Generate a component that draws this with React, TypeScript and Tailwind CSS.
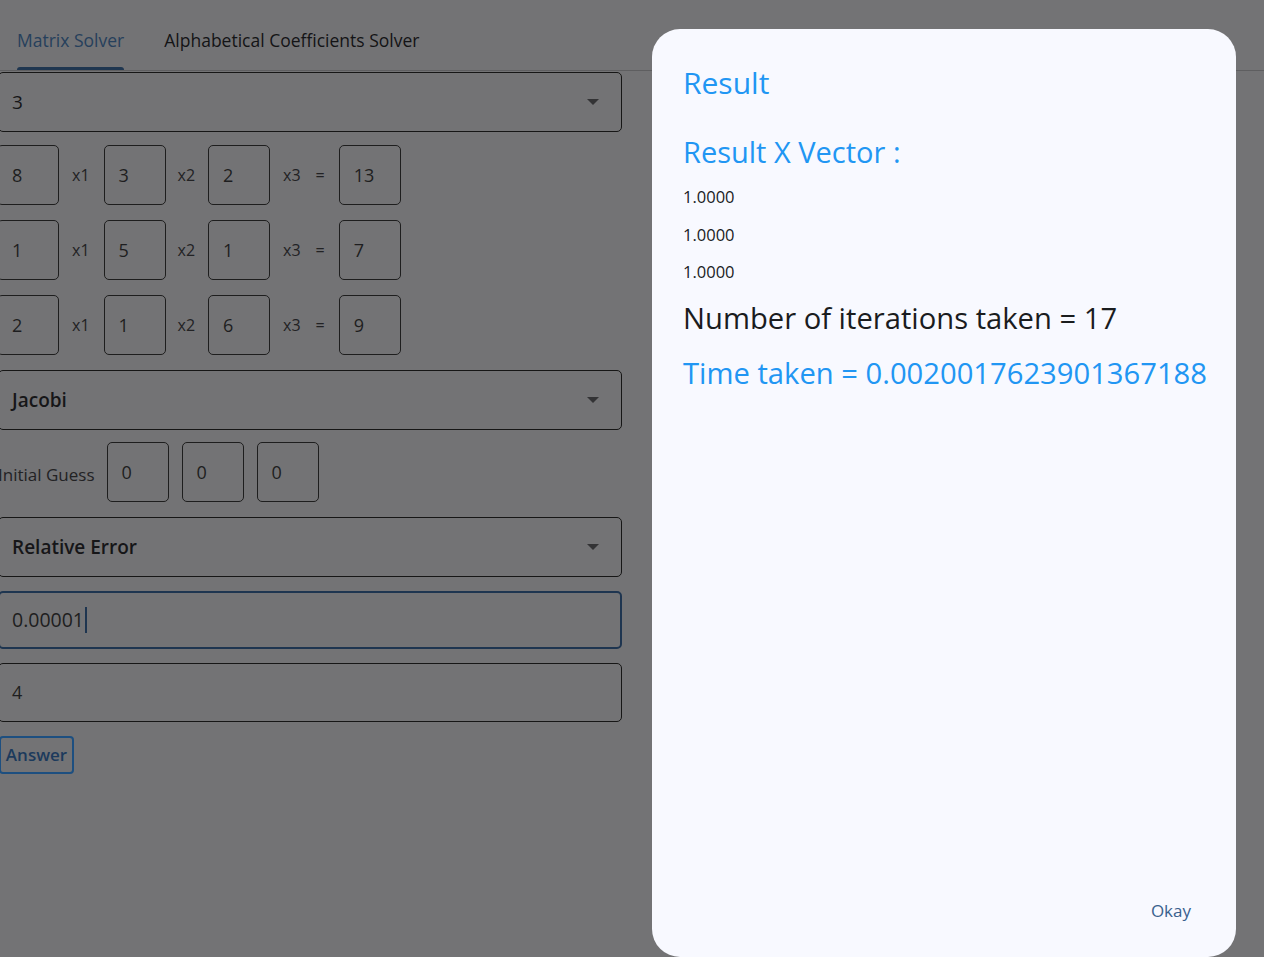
import React from "react";

const font = "font-['Open_Sans',sans-serif]";

function Arrow() {
  return (
    <svg width="12" height="6" viewBox="0 0 12 6" className="shrink-0">
      <path d="M0 0 L12 0 L6 6 Z" fill="#333335" />
    </svg>
  );
}

function Dropdown({ value, bold }: { value: string; bold?: boolean }) {
  return (
    <div className="flex h-[60px] w-[624px] items-center justify-between rounded-[5px] border border-[#161616] pl-[13px] pr-[22px]">
      <span className={"text-[19px] text-[#161618] " + (bold ? "font-semibold" : "")}>{value}</span>
      <Arrow />
    </div>
  );
}

function Cell({ v }: { v: string }) {
  return (
    <div className="flex h-[60px] w-[62px] items-center rounded-[5px] border border-[#1e1e1e] pl-[14px] text-[18px] text-[#1e1e20]">
      {v}
    </div>
  );
}

function Label({ t, cls }: { t: string; cls: string }) {
  return <span className={"text-[16px] text-[#222224] " + cls}>{t}</span>;
}

const rows = [
  ["8", "3", "2", "13"],
  ["1", "5", "1", "7"],
  ["2", "1", "6", "9"],
];

export default function App() {
  return (
    <div className={"relative h-[957px] w-[1264px] overflow-hidden bg-[#737375] " + font}>
      {/* tab bar */}
      <div className="flex h-[71px] items-end border-b border-[#5e5e60]">
        <div className="ml-[17px] flex flex-col">
          <span className="text-[17.5px] leading-none text-[#26405c]">Matrix Solver</span>
          <div className="mt-[18px] h-[3px] rounded-t-[3px] bg-[#1f3650]" />
        </div>
        <span className="mb-[21px] ml-[40px] text-[17.5px] leading-none text-[#141416]">
          Alphabetical Coefficients Solver
        </span>
      </div>

      <div className="ml-[-2px] flex flex-col">
        <div className="mt-[1px]">
          <Dropdown value="3" />
        </div>

        <div className="mt-[13px] flex flex-col gap-[15px]">
          {rows.map((r, i) => (
            <div key={i} className="flex items-center">
              <div className="ml-[-1px]">
                <Cell v={r[0]} />
              </div>
              <Label t="x1" cls="ml-[13px] mr-[14px]" />
              <Cell v={r[1]} />
              <Label t="x2" cls="ml-[12px] mr-[13px]" />
              <Cell v={r[2]} />
              <Label t="x3" cls="ml-[13px]" />
              <Label t="=" cls="ml-[15px] mr-[14px]" />
              <Cell v={r[3]} />
            </div>
          ))}
        </div>

        <div className="mt-[15px]">
          <Dropdown value="Jacobi" bold />
        </div>

        <div className="mt-[12px] flex items-center">
          <span className="mr-[12px] pt-[5px] text-[17px] text-[#222224]">Initial Guess</span>
          <div className="flex gap-[13px]">
            <Cell v="0" />
            <Cell v="0" />
            <Cell v="0" />
          </div>
        </div>

        <div className="mt-[15px]">
          <Dropdown value="Relative Error" bold />
        </div>

        <div className="mt-[14px] flex h-[58px] w-[624px] items-center rounded-[5px] border-2 border-[#1e3550] pl-[12px]">
          <span className="text-[19.5px] text-[#1e1e20]">0.00001</span>
          <span className="ml-[1px] h-[26px] w-[2px] bg-[#1e3550]" />
        </div>

        <div className="mt-[14px] flex h-[59px] w-[624px] items-center rounded-[5px] border border-[#161616] pl-[13px]">
          <span className="text-[18px] text-[#1e1e20]">4</span>
        </div>

        <div className="mt-[14px] ml-[1px] flex h-[38px] w-[75px] items-center justify-center rounded-[4px] border-2 border-[#1d4f80]">
          <span className="text-[17px] font-semibold text-[#1c3a5c]">Answer</span>
        </div>
      </div>

      {/* result dialog */}
      <div className="absolute left-[652px] top-[29px] flex h-[928px] w-[584px] flex-col rounded-[28px] bg-[#f8f9ff] pl-[31px] pr-[20px]">
        <h2 className="mt-[32px] text-[30px] leading-[44px] text-[#2196f3]">Result</h2>
        <h3 className="mt-[27px] text-[29px] leading-[40px] text-[#2196f3]">Result X Vector :</h3>
        <div className="mt-[6px] flex flex-col">
          <span className="text-[16.5px] leading-[37.5px] text-[#1a1c1e]">1.0000</span>
          <span className="text-[16.5px] leading-[37.5px] text-[#1a1c1e]">1.0000</span>
          <span className="text-[16.5px] leading-[37.5px] text-[#1a1c1e]">1.0000</span>
        </div>
        <p className="mt-[7px] whitespace-nowrap text-[29.2px] leading-[40px] text-[#1a1c1e]">
          Number of iterations taken = 17
        </p>
        <p className="mt-[15px] whitespace-nowrap text-[29.2px] leading-[40px] text-[#2196f3]">
          Time taken = 0.0020017623901367188
        </p>
        <div className="mt-auto mb-[34px] mr-[25px] flex justify-end">
          <span className="text-[17px] font-medium text-[#3a618e]">Okay</span>
        </div>
      </div>
    </div>
  );
}
